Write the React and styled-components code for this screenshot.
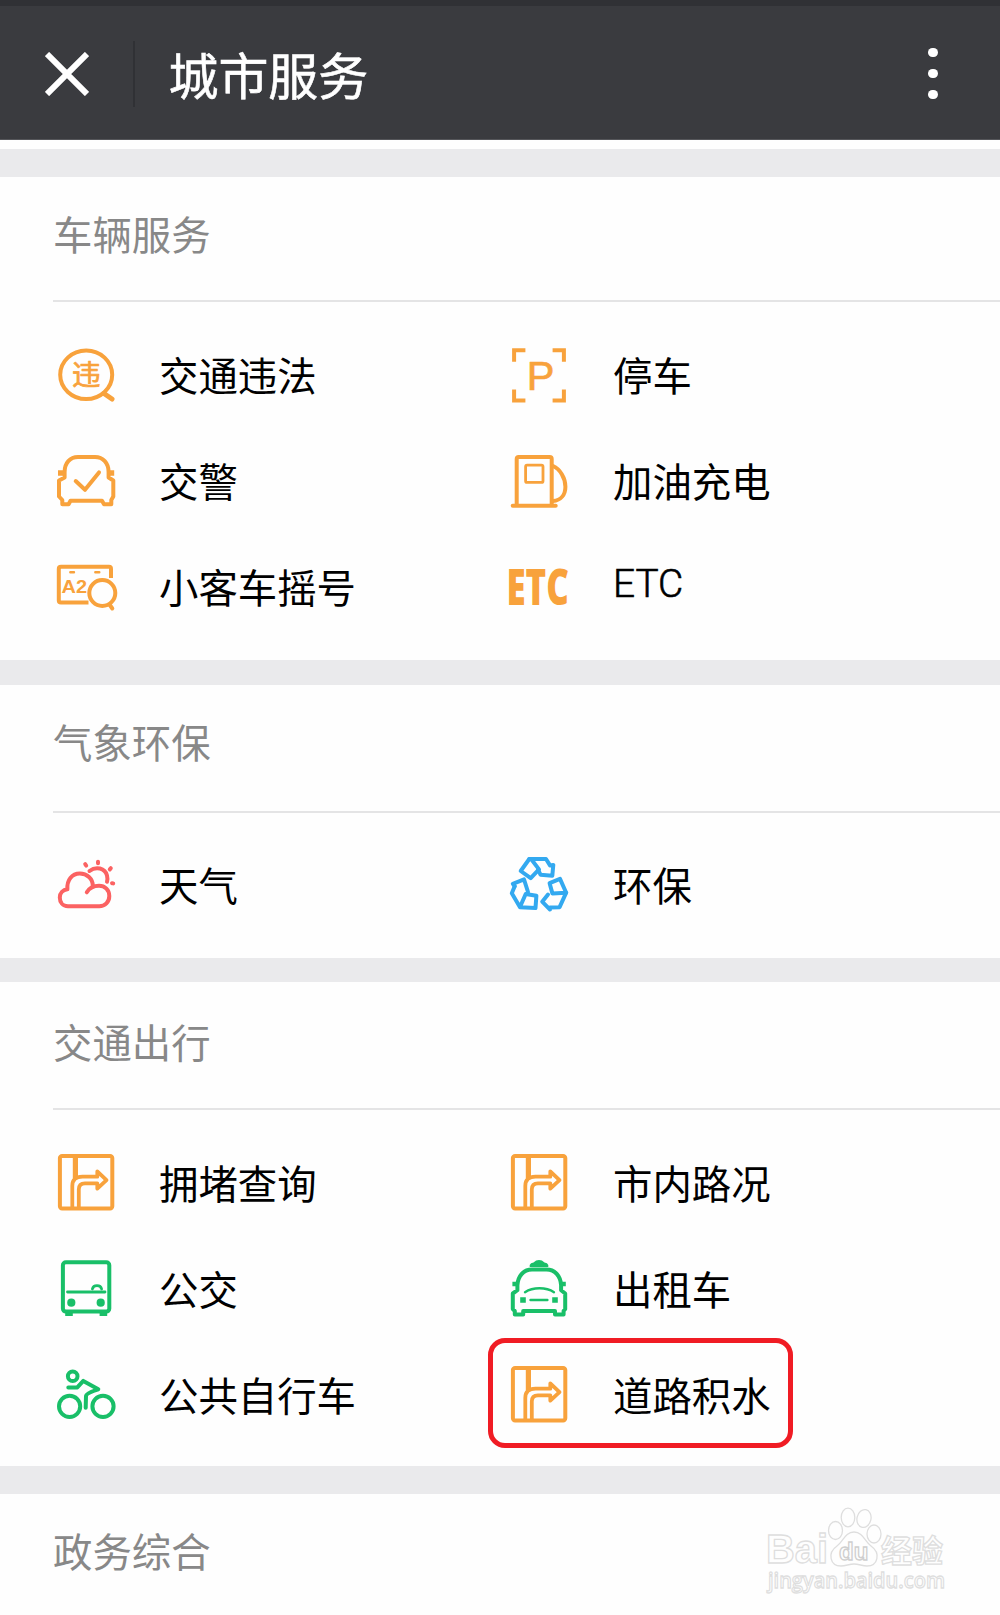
import React from 'react'
import styled, { createGlobalStyle } from 'styled-components'

const ORANGE = '#f8a23c'
const GREEN = '#19bf68'
const RED = '#fb6262'
const BLUE = '#33a9f0'

const IconText = styled.text.attrs(({ stroke, fontFamily }) => ({
  stroke: stroke || 'none',
  fontFamily: fontFamily || "'Liberation Sans', 'Noto Sans CJK SC', sans-serif",
}))`
  fill: currentColor;
`

const Dot = styled.circle`
  fill: currentColor;
  stroke: none;
`

const Solid = styled.path`
  fill: currentColor;
  stroke: none;
`

const ICONS = {
  violation: (
    <>
      <ellipse cx="30.2" cy="29.8" rx="26" ry="24.3" />
      <path d="M48 48.5L56 54" strokeWidth="5" />
      <IconText x="16" y="40.4" fontSize="28.6" stroke={ORANGE} strokeWidth="0.7">
        违
      </IconText>
    </>
  ),
  police: (
    <>
      <path d="M8.6 26.5V21C8.6 12 14 6 22 6H39C47 6 52.6 12 52.6 21V26.5L57.3 29.5V45.5L55.3 49V53.3H48L46 49.8H14.5L12.6 53.3H6.3V49L3 45.5V29.5Z" />
      <path d="M2 22H8M53 22H58.2" strokeWidth="5.6" strokeLinecap="butt" />
      <path d="M19.7 30L29 38.8L43 21.4" />
    </>
  ),
  plate: (
    <>
      <path d="M55 21V12Q55 9.8 53 9.8H5Q2.8 9.8 2.8 12V43.5Q2.8 45.6 5 45.6H32.5" strokeLinecap="butt" />
      <path d="M14.3 15.3H18M39.3 15.3H43.3" strokeWidth="2.4" />
      <IconText
        x="5.6"
        y="36.3"
        fontSize="17.8"
        fontWeight="700"
        textLength="25.5"
        lengthAdjust="spacingAndGlyphs"
      >
        A2
      </IconText>
      <circle cx="46.3" cy="36" r="13" />
      <path d="M53.5 47.5L56.3 51.5" />
    </>
  ),
  parking: (
    <>
      <path
        d="M16.4 5.2H5.1V16.7M43.6 5.2H54.9V16.7M16.4 55.4H5.1V44.4M43.6 55.4H54.9V44.4"
        strokeLinecap="butt"
        strokeLinejoin="miter"
      />
      <IconText x="17.7" y="45.3" fontSize="41.5" stroke={ORANGE} strokeWidth="0.7">
        P
      </IconText>
    </>
  ),
  fuel: (
    <>
      <path d="M7.7 54V8Q7.7 6 9.7 6H40.7Q42.7 6 42.7 8V54" />
      <path d="M3.7 54.8H46.7" />
      <rect x="16.6" y="14.2" width="17.4" height="17.2" rx="1.5" strokeWidth="2.8" />
      <path d="M44 15C51 18 56.4 27 56.4 35.7C56.4 43.5 52 49.3 44 50" />
    </>
  ),
  etc: (
    <IconText
      x="-2.6"
      y="48"
      fontSize="50"
      fontWeight="800"
      fontFamily="'Open Sans', sans-serif"
      textLength="62.5"
      lengthAdjust="spacingAndGlyphs"
    >
      ETC
    </IconText>
  ),
  weather: (
    <>
      <path d="M36.8 30.8C36.8 23.5 31 18.5 23.8 18.5C16 18.5 10.6 25 11.4 34.3C7 34.8 3.8 38 3.8 42.5C3.8 47 6.5 51.2 12 51.2H43.3C49 51.2 53.3 47 53.3 41C53.3 35 49 30.8 43 30.8C38 30.8 33.5 32.8 30.8 37.3" />
      <path d="M33.5 16C40 11 49 13 51 20.5C51.6 22.8 51.5 24.8 51 26.8" />
      <path d="M29.2 9.2L30.2 10.6M42 6.7V8.2M54.8 13.2L53.8 14.4M56 28.2L57.2 28.4" />
    </>
  ),
  recycle: (
    <g strokeWidth="4">
      <path d="M20.3 4L11.7 16L21.7 23.2L30 14.4L22.5 4.5" />
      <path d="M20.3 4H37L41 10.4L44.3 9.9L43.3 20.7L31.5 19.7L29 14.5" />
      <path d="M5.7 31.3L3.8 28.8L15 24.4L19 37" />
      <path d="M5.7 31.3L2.8 38.3L11 52.2L26.5 53L27.4 40.7L16.7 39L11.2 51.5" />
      <path d="M51 23.9L40.6 28.2L43.4 38.4L57.2 37.7Z" />
      <path d="M57.2 37.7L50.6 52.2L41 52.6V54.6L33.2 46.7L39 39.6" />
    </g>
  ),
  road: (
    <>
      <rect x="3.9" y="2.9" width="52.4" height="52.6" rx="2.2" />
      <path d="M19.4 3V25" strokeWidth="5.2" strokeLinecap="butt" />
      <path
        d="M16.3 55V33C16.3 26.5 20.5 23.7 26.5 23.7H41.3V18.4L50.5 27.1L41.3 35.6V30.3H29C25 30.3 22.8 32.7 22.8 36.5V55"
        strokeWidth="3.8"
      />
    </>
  ),
  bus: (
    <>
      <rect x="6.9" y="3.2" width="46.4" height="49.4" rx="3" />
      <path d="M11.5 33H49" strokeWidth="2.8" />
      <path d="M36.4 30C37.4 25.6 44.6 25.6 45.6 30" strokeWidth="2.8" />
      <path d="M9.2 55.2H16.8M43.6 55.2H51.2" strokeWidth="3.6" strokeLinecap="butt" />
      <Dot cx="15.3" cy="43.7" r="4.1" />
      <Dot cx="44.7" cy="43.7" r="4.1" />
    </>
  ),
  taxi: (
    <>
      <Solid d="M20.7 8V6Q21.5 3.5 24.5 3.4Q27 1 30 1Q33 1 35.5 3.4Q38.5 3.5 39.3 6V8Z" />
      <path d="M8.4 31.2V26C9 17.5 14 10.6 23 10.6H37.5C46.5 10.6 51.5 17.5 52.1 26V31.2L56.2 34.5V50L54.6 52V55.6H46V52H14.2V55.6H5.8V52L3.8 50V34.5Z" />
      <path d="M3.4 25H8.4M52 25H56.8" strokeWidth="4.6" strokeLinecap="butt" />
      <path d="M16 33.2C24 28 37 28 45 33.2M21.5 41H38.4" strokeWidth="2.4" />
      <Solid d="M11.2 38.2H16.8V43.8H11.2ZM43.2 38.2H48.8V43.8H43.2Z" />
    </>
  ),
  bike: (
    <>
      <circle cx="16.7" cy="11.3" r="4.8" />
      <circle cx="13.6" cy="41.3" r="10.6" />
      <circle cx="47" cy="41.3" r="10.6" />
      <path d="M12.3 22.4H21.3L27.3 15.9L42.3 24.3Q30.4 28 30 31L29.7 42.8" />
    </>
  ),
}

const SECTIONS = [
  {
    title: '车辆服务',
    height: 483,
    head: 125,
    headPad: 26,
    pad: 43,
    items: [
      { icon: 'violation', label: '交通违法', color: ORANGE },
      { icon: 'parking', label: '停车', color: ORANGE },
      { icon: 'police', label: '交警', color: ORANGE },
      { icon: 'fuel', label: '加油充电', color: ORANGE },
      { icon: 'plate', label: '小客车摇号', color: ORANGE },
      { icon: 'etc', label: 'ETC', color: ORANGE, latin: true },
    ],
  },
  {
    title: '气象环保',
    height: 273,
    gap: 25,
    head: 128,
    headPad: 26,
    pad: 42,
    items: [
      { icon: 'weather', label: '天气', color: RED },
      { icon: 'recycle', label: '环保', color: BLUE },
    ],
  },
  {
    title: '交通出行',
    height: 484,
    gap: 24,
    head: 128,
    headPad: 29,
    pad: 43,
    items: [
      { icon: 'road', label: '拥堵查询', color: ORANGE },
      { icon: 'road', label: '市内路况', color: ORANGE },
      { icon: 'bus', label: '公交', color: GREEN },
      { icon: 'taxi', label: '出租车', color: GREEN },
      { icon: 'bike', label: '公共自行车', color: GREEN },
      { icon: 'road', label: '道路积水', color: ORANGE, marked: true },
    ],
  },
]

function ServiceItem({ icon, label, color, latin, marked }) {
  return (
    <Item>
      <Icon viewBox="0 0 60 60" stroke={color} color={color}>
        {ICONS[icon]}
      </Icon>
      <Label $latin={latin}>{label}</Label>
      {marked && <Marker />}
    </Item>
  )
}

function Watermark() {
  return (
    <WatermarkArt viewBox="0 0 190 96">
      <text x="4" y="63" fontSize="40" fontWeight="700" textLength="62" lengthAdjust="spacingAndGlyphs">
        Bai
      </text>
      <path d="M92 32C101 32 103 42 109 46C119 53 116 66 105 66C100 66 97 64 92 64C87 64 84 66 79 66C68 66 65 53 75 46C81 42 83 32 92 32Z" />
      <ellipse cx="73.5" cy="30.5" rx="7" ry="9" />
      <ellipse cx="86" cy="17.5" rx="6.8" ry="9.3" />
      <ellipse cx="102" cy="18.5" rx="7" ry="9" transform="rotate(12 102 18.5)" />
      <ellipse cx="112" cy="34" rx="7" ry="9" />
      <text x="77" y="59.5" fontSize="24" fontWeight="700" stroke="#cfcfcf">
        du
      </text>
      <text x="119" y="62" fontSize="31" fontWeight="700" textLength="62">
        经验
      </text>
      <text
        x="6"
        y="88"
        fontSize="22"
        fontWeight="600"
        fontFamily="'Open Sans', sans-serif"
        textLength="177"
        lengthAdjust="spacingAndGlyphs"
      >
        jingyan.baidu.com
      </text>
    </WatermarkArt>
  )
}

export default function App() {
  return (
    <Page>
      <GlobalStyle />
      <Header>
        <CloseIcon viewBox="0 0 44 44">
          <path d="M2 2L42 42M42 2L2 42" />
        </CloseIcon>
        <HeaderRule />
        <HeaderTitle>城市服务</HeaderTitle>
        <Menu>
          <MenuDot />
          <MenuDot />
          <MenuDot />
        </Menu>
      </Header>
      <Band />
      {SECTIONS.map(({ title, height, gap, head, headPad, pad, items }) => (
        <Section key={title} $height={height} $gap={gap}>
          <SectionHead $height={head} $pad={headPad}>
            <SectionTitle>{title}</SectionTitle>
          </SectionHead>
          <Grid $pad={pad}>
            {items.map(item => (
              <ServiceItem key={item.label} {...item} />
            ))}
          </Grid>
        </Section>
      ))}
      <Band />
      <Footer>
        <SectionTitle>政务综合</SectionTitle>
        <Watermark />
      </Footer>
    </Page>
  )
}

const GlobalStyle = createGlobalStyle`
  body {
    margin: 0;
    background: #fefefe;
    font-family: Roboto, 'Noto Sans CJK SC', sans-serif;
  }
`

const Page = styled.div`
  width: 1000px;
  height: 1615px;
  display: flex;
  flex-direction: column;
  overflow: hidden;
  background: #fefefe;
`

const Header = styled.header`
  box-sizing: border-box;
  flex: none;
  height: 140px;
  margin-bottom: 9px;
  padding: 2px 62px 0 45px;
  display: flex;
  align-items: center;
  border-top: 6px solid #303135;
  border-bottom: 1px solid #55565a;
  background: #3a3b3f;
  color: #fff;
`

const CloseIcon = styled.svg`
  width: 44px;
  height: 44px;
  stroke: #fff;
  stroke-width: 6;
`

const HeaderRule = styled.div`
  width: 2px;
  height: 66px;
  margin: 0 33.5px 0 44px;
  background: #303135;
`

const HeaderTitle = styled.h1`
  margin: 0;
  flex: 1;
  padding-bottom: 2px;
  font-family: 'Noto Sans CJK SC', sans-serif;
  font-size: 49.9px;
  font-weight: 400;
  line-height: 66px;
  -webkit-text-stroke: 0.6px #fff;
`

const Menu = styled.div`
  display: flex;
  flex-direction: column;
  gap: 11.6px;
`

const MenuDot = styled.span`
  width: 9.6px;
  height: 9.6px;
  border-radius: 50%;
  background: #fff;
`

const Band = styled.div`
  flex: none;
  height: 28px;
  background: #eaeaec;
`

const Section = styled.section`
  flex: none;
  height: ${({ $height }) => $height}px;
  border-top: ${({ $gap }) => $gap || 0}px solid #eaeaec;
`

const SectionHead = styled.div`
  box-sizing: border-box;
  height: ${({ $height }) => $height}px;
  margin-left: 53px;
  padding-top: ${({ $pad }) => $pad}px;
  border-bottom: 2px solid #e4e4e5;
`

const SectionTitle = styled.h2`
  margin: 0;
  font-family: 'Noto Sans CJK SC', sans-serif;
  font-size: 39.4px;
  font-weight: 400;
  line-height: 60px;
  color: #888;
`

const Grid = styled.div`
  display: grid;
  grid-template-columns: 453px 1fr;
  grid-auto-rows: 60px;
  row-gap: 46px;
  padding: ${({ $pad }) => $pad}px 0 0 56px;
`

const Item = styled.div`
  position: relative;
  display: flex;
  align-items: center;
  gap: 43px;

  &:nth-child(even) {
    gap: 44px;
  }
`

const Icon = styled.svg`
  flex: none;
  width: 60px;
  height: 60px;
  overflow: visible;
  fill: none;
  stroke-width: 4;
  stroke-linecap: round;
  stroke-linejoin: round;
`

const Label = styled.span`
  font-family: ${({ $latin }) => ($latin ? 'Roboto' : "'Noto Sans CJK SC'")}, sans-serif;
  font-size: ${({ $latin }) => ($latin ? 38.8 : 39.4)}px;
  font-weight: ${({ $latin }) => ($latin ? 300 : 400)};
  -webkit-text-stroke: ${({ $latin }) => ($latin ? 0.6 : 0)}px #000;
  line-height: 60px;
  padding-bottom: ${({ $latin }) => ($latin ? 7 : 2)}px;
  color: #000;
`

const Marker = styled.div`
  position: absolute;
  top: -27px;
  left: -21px;
  box-sizing: border-box;
  width: 305px;
  height: 110px;
  border: 5px solid #f01c24;
  border-radius: 17px;
`

const Footer = styled.footer`
  flex: 1;
  display: flex;
  justify-content: space-between;
  padding: 26px 48px 0 53px;
`

const WatermarkArt = styled.svg`
  width: 190px;
  height: 96px;
  margin-top: -20px;
  overflow: visible;
  fill: #fefefe;
  stroke: #dedede;
  stroke-width: 1.3;
  font-family: 'Liberation Sans', 'Noto Sans CJK SC', sans-serif;
`
